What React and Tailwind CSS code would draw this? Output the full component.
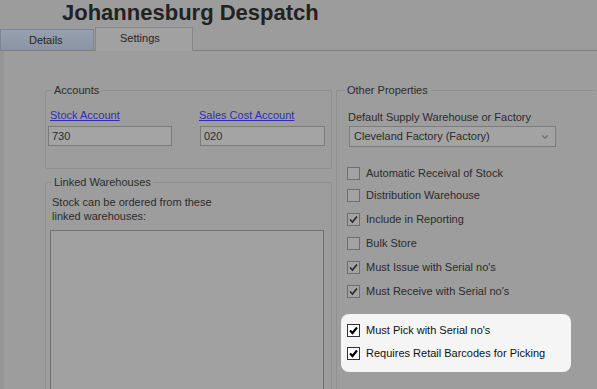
import { ChevronDown } from 'lucide-react'

function Check({ checked, bright }) {
  return (
    <span
      className={`flex h-[13px] w-[13px] shrink-0 items-center justify-center border ${
        bright ? 'border-[#333] bg-white' : 'border-[#6e6e6e] bg-[#a3a3a3]'
      }`}
    >
      {checked && (
        <svg width="11" height="11" viewBox="0 0 11 11">
          <path
            d="M2 5.5 L4.5 8 L9 2.5"
            fill="none"
            stroke={bright ? '#000' : '#2a2a2a'}
            strokeWidth={bright ? 2.2 : 1.7}
          />
        </svg>
      )}
    </span>
  )
}

function CheckRow({ label, checked, bright, className = '' }) {
  return (
    <div className={`flex h-[13px] items-center ${className}`}>
      <Check checked={checked} bright={bright} />
      <span
        className={`ml-[6px] whitespace-nowrap text-[11px] leading-[13px] ${
          bright ? 'text-[#111]' : 'text-[#2b2b2b]'
        }`}
      >
        {label}
      </span>
    </div>
  )
}

const dimRows = [
  { label: 'Automatic Receival of Stock', checked: false, mt: 'mt-[20px]' },
  { label: 'Distribution Warehouse', checked: false, mt: 'mt-[9px]' },
  { label: 'Include in Reporting', checked: true, mt: 'mt-[11px]' },
  { label: 'Bulk Store', checked: false, mt: 'mt-[11px]' },
  { label: "Must Issue with Serial no's", checked: true, mt: 'mt-[11px]' },
  { label: "Must Receive with Serial no's", checked: true, mt: 'mt-[11px]' },
]

export default function App() {
  return (
    <div className="flex h-[389px] w-[597px] flex-col overflow-hidden bg-[#9c9c9c] font-['Liberation_Sans',Arial,sans-serif] text-[#2b2b2b]">
      <div className="h-[27px] shrink-0 pl-[62px]">
        <h1 className="text-[22px] font-bold leading-[26px] text-[#222]">Johannesburg Despatch</h1>
      </div>

      <div className="flex h-[24px] shrink-0 items-end border-b border-[#7e7e7e]">
        <div className="h-[21px] w-[94px] border border-b-0 border-[#7c8696] bg-gradient-to-b from-[#97a1ae] to-[#8a94a2] pl-[28px] pt-[4px] text-[11px] leading-[13px] text-[#262626]">
          Details
        </div>
        <div className="relative -mb-px ml-[1px] h-[24px] w-[98px] border border-b-0 border-[#868686] bg-[#a1a1a1] pl-[24px] pt-[4px] text-[11px] leading-[13px] text-[#262626]">
          Settings
        </div>
      </div>

      <div className="flex min-h-0 flex-1 border-l-[4px] border-[#959595] bg-[#9d9d9d]">
        <div className="w-[332px] shrink-0 pl-[41px]">
          <fieldset className="mt-[33px] h-[85px] w-[287px] rounded-[2px] border border-[#909090]">
            <legend className="ml-[6px] px-[2px] text-[11px] leading-[13px]">Accounts</legend>
            <div className="mt-[12px] flex pl-[2px]">
              <div className="w-[124px]">
                <a className="block pl-[2px] text-[11px] leading-[13px] text-[#2d2dba] underline">Stock Account</a>
                <div className="mt-[4px] h-[20px] border border-[#7a7a7a] bg-[#a4a4a4] pl-[3px] text-[11px] leading-[18px]">730</div>
              </div>
              <div className="ml-[28px] w-[125px]">
                <a className="-ml-[1px] block text-[11px] leading-[13px] text-[#2d2dba] underline">Sales Cost Account</a>
                <div className="mt-[4px] h-[20px] border border-[#7a7a7a] bg-[#a4a4a4] pl-[3px] text-[11px] leading-[18px]">020</div>
              </div>
            </div>
          </fieldset>

          <fieldset className="mt-[7px] h-[260px] w-[287px] rounded-[2px] border border-[#909090]">
            <legend className="ml-[6px] px-[2px] text-[11px] leading-[13px]">Linked Warehouses</legend>
            <p className="mt-[6px] pl-[6px] text-[11px] leading-[14px]">
              Stock can be ordered from these
              <br />
              linked warehouses:
            </p>
            <div className="ml-[4px] mt-[7px] h-[200px] w-[274px] border border-[#707070] bg-[#a1a1a1]" />
          </fieldset>
        </div>

        <fieldset className="mt-[33px] h-[320px] flex-1 rounded-[2px] border border-r-0 border-[#909090]">
          <legend className="ml-[8px] px-[2px] text-[11px] leading-[13px]">Other Properties</legend>
          <div className="mt-[14px] pl-[11px] text-[11px] leading-[13px]">Default Supply Warehouse or Factory</div>
          <div className="ml-[12px] mt-[2px] flex h-[21px] w-[207px] items-center justify-between border border-[#7c7c7c] bg-[#a3a3a3] pl-[4px] pr-[5px] text-[11px]">
            <span>Cleveland Factory (Factory)</span>
            <ChevronDown size={10} strokeWidth={3} className="text-[#707070]" />
          </div>

          <div className="pl-[10px]">
            {dimRows.map((row) => (
              <CheckRow key={row.label} label={row.label} checked={row.checked} className={row.mt} />
            ))}
          </div>

          <div className="ml-[4px] mt-[16px] w-[230px] rounded-[8px] bg-[#f5f5f5] pb-[12px] pl-[6px] pt-[10px]">
            <CheckRow label="Must Pick with Serial no's" checked bright />
            <CheckRow label="Requires Retail Barcodes for Picking" checked bright className="mt-[10px]" />
          </div>
        </fieldset>
      </div>
    </div>
  )
}
